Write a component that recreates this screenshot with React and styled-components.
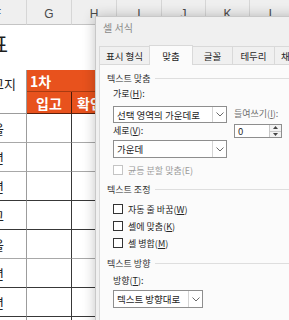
import React from "react"
import styled, { createGlobalStyle } from "styled-components"

const GlobalStyle = createGlobalStyle`
  html, body {
    margin: 0;
    padding: 0;
    background: #ffffff;
  }
  body {
    width: 289px;
    height: 320px;
    overflow: hidden;
    font-family: "Noto Sans CJK KR", "Noto Sans", sans-serif;
  }
`

const Screen = styled.div`
  position: relative;
  width: 289px;
  height: 320px;
  overflow: hidden;
`

// ---------- spreadsheet ----------
const Sheet = styled.div`
  display: grid;
  grid-template-columns: 27px 45px 45px 45px 44px 44px 45px 45px;
  grid-template-rows: 25px 45px 22px 22px repeat(8, 29px);
`

const ColHead = styled.div`
  display: flex;
  align-items: center;
  justify-content: ${p => (p.$clip ? "flex-end" : "center")};
  padding: 3px ${p => (p.$clip ? "25px" : "0")} 0 0;
  overflow: hidden;
  background: #efefef;
  border-right: 1px solid #d6d6d6;
  border-bottom: 1px solid #c4c4c4;
  color: #4a4a4a;
  font: 12px "Liberation Sans", sans-serif;
`

const TitleCell = styled.div`
  grid-column: 1;
  grid-row: 2;
  display: flex;
  align-items: center;
  justify-content: flex-end;
  padding: 0 19px 9px 0;
  overflow: hidden;
  white-space: nowrap;
  font-size: 21px;
  color: #1e1e1e;
`

const NameCell = styled.div`
  grid-column: 1;
  grid-row: 3 / span 2;
  display: flex;
  justify-content: flex-end;
  align-items: flex-start;
  padding: 4px 10px 0 0;
  overflow: hidden;
  white-space: nowrap;
  font-size: 13px;
  color: #222;
  border-right: 1px solid #9c9c9c;
  border-bottom: 1px solid #9c9c9c;
`

const OrangeCell = styled.div`
  grid-column: ${p => p.$col};
  grid-row: ${p => p.$row};
  display: flex;
  align-items: center;
  justify-content: ${p => (p.$center ? "center" : "flex-start")};
  padding-left: ${p => p.$pad || 0}px;
  background: #e8521d;
  color: #ffffff;
  font-weight: 700;
  font-size: 14px;
  white-space: nowrap;
  overflow: hidden;
  border-bottom: 1px solid ${p => (p.$top ? "#a83b12" : "#5c200b")};
  border-right: ${p => (p.$divide ? "1px solid #4a1a08" : "none")};
`

const DataCell = styled.div`
  grid-column: ${p => p.$col};
  grid-row: ${p => p.$row};
  display: flex;
  align-items: center;
  justify-content: flex-end;
  padding-right: ${p => (p.$label ? "22px" : "0")};
  overflow: hidden;
  white-space: nowrap;
  font-size: 13px;
  color: #222;
  border-bottom: 1px solid ${p => (p.$dark ? "#383838" : "#a8a8a8")};
  border-right: 1px solid ${p => p.$edge || "transparent"};
`

// ---------- dialog ----------
const Dialog = styled.div`
  position: absolute;
  left: 95px;
  top: 16px;
  width: 220px;
  height: 320px;
  display: flex;
  flex-direction: column;
  padding-left: 3px;
  background: #f0f0f0;
  border: 1px solid #c8c8c8;
  box-shadow: 0 0 12px rgba(0, 0, 0, 0.24);
  font-size: 9px;
  color: #262626;
`

const TitleBar = styled.div`
  height: 22px;
  line-height: 22px;
  padding-left: 4px;
  font-size: 10px;
  color: #8a8a8a;
`

const Tabs = styled.div`
  display: flex;
  align-items: flex-end;
  height: 25px;
`

const Tab = styled.div`
  width: ${p => p.$w}px;
  height: ${p => (p.$active ? 20 : 18)}px;
  flex: none;
  display: flex;
  align-items: center;
  justify-content: center;
  box-sizing: border-box;
  border: 1px solid #d9d9d9;
  border-bottom: none;
  margin-left: -1px;
  margin-bottom: ${p => (p.$active ? -1 : 0)}px;
  background: ${p => (p.$active ? "#fbfbfb" : "#f0f0f0")};
  position: relative;
  z-index: ${p => (p.$active ? 1 : 0)};
  font-size: 9.5px;
  white-space: nowrap;
  &:first-child {
    margin-left: 0;
  }
`

const Panel = styled.div`
  flex: 1;
  background: #fbfbfb;
  border: 1px solid #d9d9d9;
`

const GroupHead = styled.div`
  display: flex;
  align-items: center;
  height: 14px;
  margin: ${p => p.$mt}px 0 0 7px;
  color: #333;
  &::after {
    content: "";
    flex: 1;
    height: 1px;
    margin-left: 5px;
    background: #dedede;
  }
`

const AlignGrid = styled.div`
  display: grid;
  grid-template-columns: 114px 48px;
  column-gap: 7px;
  margin-left: 13px;
`

const Column = styled.div`
  display: flex;
  flex-direction: column;
  padding-top: ${p => p.$pt || 0}px;
  margin-left: ${p => p.$ml || 0}px;
`

const Label = styled.div`
  height: 14px;
  line-height: 14px;
  margin-top: ${p => p.$mt || 0}px;
  white-space: nowrap;
  color: ${p => (p.$muted ? "#6f6f6f" : "#262626")};
`

const Select = styled.div`
  display: flex;
  width: ${p => p.$w}px;
  height: ${p => p.$h || 17}px;
  margin-top: ${p => p.$mt || 0}px;
  box-sizing: border-box;
  border: 1px solid #8e8e8e;
  background: #ffffff;
`

const SelectText = styled.div`
  flex: 1;
  display: flex;
  align-items: center;
  padding-left: 3px;
  white-space: nowrap;
  overflow: hidden;
  font-size: 9.5px;
`

const SelectButton = styled.div`
  width: 13px;
  display: flex;
  align-items: center;
  justify-content: center;
  border-left: 1px solid #d4d4d4;
`

const SpinBox = styled.div`
  display: flex;
  height: 14px;
  margin-top: 3px;
  box-sizing: border-box;
  border: 1px solid #8e8e8e;
  background: #ffffff;
`

const SpinValue = styled.div`
  flex: 1;
  display: flex;
  align-items: center;
  padding-left: 3px;
  font-size: 9.5px;
`

const SpinButtons = styled.div`
  width: 11px;
  display: flex;
  flex-direction: column;
  border-left: 1px solid #c8c8c8;
`

const SpinArrow = styled.div`
  flex: 1;
  display: flex;
  align-items: center;
  justify-content: center;
  background: #f2f2f2;
  & + & {
    border-top: 1px solid #c8c8c8;
  }
`

const Check = styled.label`
  display: flex;
  align-items: center;
  gap: 5px;
  height: 14px;
  margin: ${p => p.$mt || 0}px 0 0 ${p => p.$ml || 0}px;
  white-space: nowrap;
  color: ${p => (p.$disabled ? "#9a9a9a" : "#262626")};
`

const Box = styled.span`
  width: 10px;
  height: 10px;
  box-sizing: border-box;
  border: 1px solid ${p => (p.$disabled ? "#c4c4c4" : "#333333")};
  background: #ffffff;
`

const Chevron = () => (
  <svg width="8" height="5" viewBox="0 0 8 5">
    <polyline points="0.5,0.5 4,4 7.5,0.5" fill="none" stroke="#6a6a6a" strokeWidth="1" />
  </svg>
)

const Tri = ({ up }) => (
  <svg width="5" height="3" viewBox="0 0 5 3">
    <polygon points={up ? "0,3 2.5,0 5,3" : "0,0 2.5,3 5,0"} fill="#444" />
  </svg>
)

const colLetters = ["F", "G", "H", "I", "J", "K", "L", "M"]
const rowLabels = ["을", "년", "년", "고", "을", "년", "년", "년"]
const darkLines = [false, false, true, true, false, true, true, false]
const tabs = [
  { name: "표시 형식", w: 51 },
  { name: "맞춤", w: 44, active: true },
  { name: "글꼴", w: 41 },
  { name: "테두리", w: 43 },
  { name: "채우기", w: 40 },
]

const App = () => {
  return (
    <Screen>
      <GlobalStyle />
      <Sheet>
        {colLetters.map((c, i) => (
          <ColHead key={c} $clip={i === 0}>{c}</ColHead>
        ))}
        <TitleCell>재고 현황표</TitleCell>
        <NameCell>출고지</NameCell>
        <OrangeCell $col="2 / -1" $row="3" $pad={3} $top>1차</OrangeCell>
        <OrangeCell $col="2" $row="4" $center $divide>입고</OrangeCell>
        <OrangeCell $col="3 / -1" $row="4" $pad={5}>확인</OrangeCell>
        {rowLabels.map((t, r) => (
          <React.Fragment key={r}>
            <DataCell $col="1" $row={r + 5} $label $dark={darkLines[r]} $edge="#9c9c9c">{t}</DataCell>
            <DataCell $col="2" $row={r + 5} $dark={darkLines[r]} $edge="#383838" />
            <DataCell $col="3 / -1" $row={r + 5} $dark={darkLines[r]} />
          </React.Fragment>
        ))}
      </Sheet>

      <Dialog>
        <TitleBar>셀 서식</TitleBar>
        <Tabs>
          {tabs.map(t => (
            <Tab key={t.name} $w={t.w} $active={t.active}>{t.name}</Tab>
          ))}
        </Tabs>
        <Panel>
          <GroupHead $mt={6}>텍스트 맞춤</GroupHead>
          <AlignGrid>
            <Column>
              <Label $mt={2}>가로(<u>H</u>):</Label>
              <Select $w={114} $mt={5}>
                <SelectText>선택 영역의 가운데로</SelectText>
                <SelectButton><Chevron /></SelectButton>
              </Select>
              <Label $mt={1}>세로(<u>V</u>):</Label>
              <Select $w={114} $h={18} $mt={2}>
                <SelectText>가운데</SelectText>
                <SelectButton><Chevron /></SelectButton>
              </Select>
              <Check $mt={5} $disabled>
                <Box $disabled /><span>균등 분할 맞춤(E)</span>
              </Check>
            </Column>
            <Column $pt={22}>
              <Label $muted>들여쓰기(<u>I</u>):</Label>
              <SpinBox>
                <SpinValue>0</SpinValue>
                <SpinButtons>
                  <SpinArrow><Tri up /></SpinArrow>
                  <SpinArrow><Tri /></SpinArrow>
                </SpinButtons>
              </SpinBox>
            </Column>
          </AlignGrid>

          <GroupHead $mt={5}>텍스트 조정</GroupHead>
          <Check $mt={6} $ml={13}><Box /><span>자동 줄 바꿈(<u>W</u>)</span></Check>
          <Check $mt={3} $ml={13}><Box /><span>셀에 맞춤(<u>K</u>)</span></Check>
          <Check $mt={3} $ml={13}><Box /><span>셀 병합(<u>M</u>)</span></Check>

          <GroupHead $mt={6}>텍스트 방향</GroupHead>
          <Column $ml={13}>
            <Label $mt={4}>방향(<u>T</u>):</Label>
            <Select $w={90} $h={18} $mt={2}>
              <SelectText>텍스트 방향대로</SelectText>
              <SelectButton><Chevron /></SelectButton>
            </Select>
          </Column>
        </Panel>
      </Dialog>
    </Screen>
  )
}

export default App
